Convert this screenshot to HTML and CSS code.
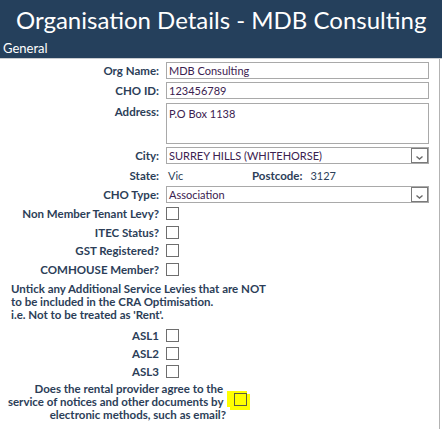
FILE: index.html
```html
<!DOCTYPE html>
<html lang="en">
<head>
<meta charset="utf-8">
<title>Organisation Details</title>
<link rel="stylesheet" href="styles.css">
</head>
<body>
<header class="header">
  <h1 class="title">Organisation Details - MDB Consulting</h1>
  <div class="tab">General</div>
</header>
<main class="page">
  <div class="form">
    <div class="row r-3">
      <label class="lbl">Org Name:</label>
      <div class="field">MDB Consulting</div>
    </div>
    <div class="row r-4">
      <label class="lbl">CHO ID:</label>
      <div class="field">123456789</div>
    </div>
    <div class="row r-3 top">
      <label class="lbl lbl-top">Address:</label>
      <div class="field area">P.O Box 1138</div>
    </div>
    <div class="row r-2">
      <label class="lbl">City:</label>
      <div class="field select">
        <span class="sel-text">SURREY HILLS (WHITEHORSE)</span>
        <span class="sel-btn"><svg width="15" height="13" viewBox="0 0 15 13"><path d="M4.5 7.5 L7.5 10 L10.5 7.5" fill="none" stroke="#6a6a6a" stroke-width="1.4"/></svg></span>
      </div>
    </div>
    <div class="row state r-2">
      <label class="lbl">State:</label>
      <div class="inline">
        <span class="val val-state">Vic</span>
        <span class="lbl">Postcode:</span>
        <span class="val val-pc">3127</span>
      </div>
    </div>
    <div class="row r-4">
      <label class="lbl">CHO Type:</label>
      <div class="field select">
        <span class="sel-text">Association</span>
        <span class="sel-btn"><svg width="15" height="13" viewBox="0 0 15 13"><path d="M4.5 7.5 L7.5 10 L10.5 7.5" fill="none" stroke="#6a6a6a" stroke-width="1.4"/></svg></span>
      </div>
    </div>
    <div class="row cb-row r-6">
      <label class="lbl">Non Member Tenant Levy?</label>
      <span class="cb"></span>
    </div>
    <div class="row cb-row r-5">
      <label class="lbl">ITEC Status?</label>
      <span class="cb"></span>
    </div>
    <div class="row cb-row r-6">
      <label class="lbl">GST Registered?</label>
      <span class="cb"></span>
    </div>
    <div class="row cb-row">
      <label class="lbl">COMHOUSE Member?</label>
      <span class="cb"></span>
    </div>
    <p class="note">Untick any Additional Service Levies that are NOT<br>to be included in the CRA Optimisation.<br>i.e. Not to be treated as 'Rent'.</p>
    <div class="row cb-row r-5">
      <label class="lbl">ASL1</label>
      <span class="cb"></span>
    </div>
    <div class="row cb-row r-5">
      <label class="lbl">ASL2</label>
      <span class="cb"></span>
    </div>
    <div class="row cb-row">
      <label class="lbl">ASL3</label>
      <span class="cb"></span>
    </div>
    <div class="consent">
      <label class="lbl consent-text">Does the rental provider agree to the&nbsp;<br>service of notices and other documents by&nbsp;<br>electronic methods, such as email?</label>
      <span class="hl"><span class="cb cb-clear"></span></span>
    </div>
  </div>
</main>
</body>
</html>
```
FILE: styles.css
```css
* { box-sizing: border-box; }
html, body { margin: 0; padding: 0; background: #fff; }
body {
  font-family: Lato, "Open Sans", sans-serif;
  color: #2c3e58;
  width: 442px;
  height: 429px;
  overflow: hidden;
}

.header {
  background: #25405c;
  height: 59px;
  border-bottom: 1px solid #c9ccd0;
  color: #fff;
}
.title {
  margin: 0;
  font-weight: 400;
  font-size: 24px;
  line-height: 29px;
  padding: 5px 0 0 16px;
  white-space: nowrap;
}
.tab {
  font-size: 13px;
  line-height: 16px;
  padding: 6px 0 0 3px;
}

.page {
  width: 440px;
  height: 370px;
  border-right: 1px solid #b3b3b3;
}
.form { padding-top: 3px; }

.row {
  display: grid;
  grid-template-columns: 159px 263px;
  column-gap: 7px;
  align-items: center;
}
.row.top { align-items: start; }
.r-2 { margin-bottom: 2px; }
.r-3 { margin-bottom: 3px; }
.r-4 { margin-bottom: 4px; }
.r-5 { margin-bottom: 5px; }
.r-6 { margin-bottom: 6px; }

.lbl {
  font-weight: 700;
  font-size: 11.5px;
  line-height: 13px;
  text-align: right;
  white-space: nowrap;
  color: #2c3e58;
}
.lbl-top { padding-top: 2px; }

.field {
  height: 17px;
  border: 1px solid #a9a9a9;
  background: #fff;
  font-size: 11px;
  line-height: 15px;
  padding: 0 2px;
  color: #3b2150;
  white-space: nowrap;
  overflow: hidden;
}
.field.area {
  height: 41px;
  padding-top: 2px;
}
.select {
  display: flex;
  align-items: center;
  padding-right: 0;
}
.sel-text { flex: 1; }
.sel-btn {
  width: 17px;
  height: 15px;
  border: 1px solid #7a7a7a;
  margin-right: 0;
  display: flex;
  align-items: center;
  justify-content: center;
  background: #fff;
}

.state { height: 18px; margin-top: 2px; }
.inline { display: flex; align-items: center; }
.val {
  font-size: 11px;
  line-height: 13px;
  color: #2d3f5a;
}
.val-state { width: 86px; padding-left: 2px; }
.val-pc { margin-left: 8px; }

.cb-row { height: 13px; }
.cb {
  display: block;
  width: 13px;
  height: 13px;
  border: 1px solid #6e6e6e;
  background: #fff;
}
.cb-clear { background: transparent; border-color: #5c5c40; }

.note {
  margin: 6px 0 8px 11px;
  font-weight: 700;
  font-size: 11.5px;
  line-height: 13px;
  color: #2c3e58;
}

.consent {
  display: grid;
  grid-template-columns: 226px auto;
  column-gap: 1px;
  margin-top: 4px;
  align-items: start;
}
.hl {
  display: block;
  width: 20px;
  height: 16px;
  margin-top: 9px;
  padding: 2px 0 0 7px;
  background: #ffff00;
  box-shadow: 3px 3px 0 #ffff00;
}
```
